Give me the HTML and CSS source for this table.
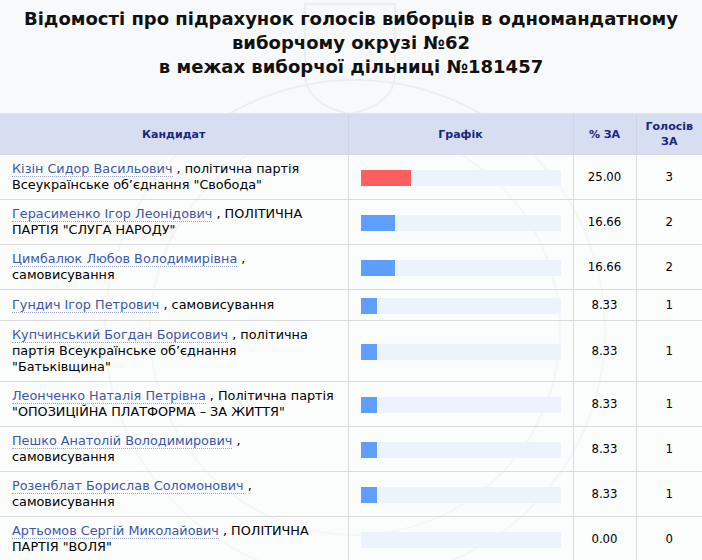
FILE: index.html
```html
<!DOCTYPE html>
<html lang="uk">
<head>
<meta charset="utf-8">
<title>Відомості про підрахунок голосів</title>
<link rel="stylesheet" href="styles.css">
</head>
<body>
<div class="page">
  <h1 class="title">Відомості про підрахунок голосів виборців в одномандатному<br>виборчому окрузі №62<br>в межах виборчої дільниці №181457</h1>
  <table class="results">
    <colgroup>
      <col class="c-cand"><col class="c-graph"><col class="c-pct"><col class="c-votes">
    </colgroup>
    <thead>
      <tr><th>Кандидат</th><th>Графік</th><th>% ЗА</th><th>Голосів<br>ЗА</th></tr>
    </thead>
    <tbody>
      <tr><td class="cand"><a class="name">Кізін Сидор Васильович</a> , політична партія Всеукраїнське об’єднання "Свобода"</td><td class="graph"><div class="track"><div class="bar red" style="width:50px"></div></div></td><td class="num">25.00</td><td class="num">3</td></tr>
      <tr><td class="cand"><a class="name">Герасименко Ігор Леонідович</a> , ПОЛІТИЧНА ПАРТІЯ "СЛУГА НАРОДУ"</td><td class="graph"><div class="track"><div class="bar" style="width:34px"></div></div></td><td class="num">16.66</td><td class="num">2</td></tr>
      <tr><td class="cand"><a class="name">Цимбалюк Любов Володимирівна</a> , самовисування</td><td class="graph"><div class="track"><div class="bar" style="width:34px"></div></div></td><td class="num">16.66</td><td class="num">2</td></tr>
      <tr><td class="cand"><a class="name">Гундич Ігор Петрович</a> , самовисування</td><td class="graph"><div class="track"><div class="bar" style="width:16px"></div></div></td><td class="num">8.33</td><td class="num">1</td></tr>
      <tr><td class="cand"><a class="name">Купчинський Богдан Борисович</a> , політична партія Всеукраїнське об’єднання "Батьківщина"</td><td class="graph"><div class="track"><div class="bar" style="width:16px"></div></div></td><td class="num">8.33</td><td class="num">1</td></tr>
      <tr><td class="cand"><a class="name">Леонченко Наталія Петрівна</a> , Політична партія "ОПОЗИЦІЙНА ПЛАТФОРМА – ЗА ЖИТТЯ"</td><td class="graph"><div class="track"><div class="bar" style="width:16px"></div></div></td><td class="num">8.33</td><td class="num">1</td></tr>
      <tr><td class="cand"><a class="name">Пешко Анатолій Володимирович</a> , самовисування</td><td class="graph"><div class="track"><div class="bar" style="width:16px"></div></div></td><td class="num">8.33</td><td class="num">1</td></tr>
      <tr><td class="cand"><a class="name">Розенблат Борислав Соломонович</a> , самовисування</td><td class="graph"><div class="track"><div class="bar" style="width:16px"></div></div></td><td class="num">8.33</td><td class="num">1</td></tr>
      <tr><td class="cand"><a class="name">Артьомов Сергій Миколайович</a> , ПОЛІТИЧНА ПАРТІЯ "ВОЛЯ"</td><td class="graph"><div class="track"><div class="bar" style="width:0px"></div></div></td><td class="num">0.00</td><td class="num">0</td></tr>
    </tbody>
  </table>
</div>
</body>
</html>
```
FILE: styles.css
```css
html, body {
  margin: 0;
  padding: 0;
}
body {
  background-color: #f8f9fa;
  background-image: url("data:image/svg+xml;utf8,<svg xmlns='http://www.w3.org/2000/svg' width='702' height='560'><g fill='none' stroke='%23eceef0' stroke-width='2'><path d='M305 4 h90 v70 q0 30 -45 40 q-45 -10 -45 -40 z'/><circle cx='355' cy='330' r='250'/><circle cx='355' cy='330' r='205'/></g></svg>");
  background-repeat: no-repeat;
  font-family: "DejaVu Sans", Verdana, sans-serif;
  color: #000;
}
.page {
  width: 702px;
}
.title {
  margin: 0;
  padding: 7px 0 0;
  height: 106px;
  box-sizing: content-box;
  text-align: center;
  font-size: 18px;
  line-height: 24px;
  font-weight: bold;
  color: #111;
}
.results {
  width: 702px;
  border-collapse: collapse;
  table-layout: fixed;
  font-size: 12.8px;
  line-height: 16px;
}
.c-cand { width: 348px; }
.c-graph { width: 225px; }
.c-pct { width: 63px; }
.c-votes { width: 66px; }
.results th {
  background: #d7def2;
  color: #1a2680;
  font-size: 11px;
  line-height: 15px;
  font-weight: bold;
  padding: 5px 2px;
  height: 29px;
  border-top: 1px solid #e2e4e8;
  border-left: 1px solid #cfd4e2;
  text-align: center;
  vertical-align: middle;
}
.results th:first-child { border-left: none; }
.results td {
  background: rgba(255, 255, 255, 0.45);
  padding: 6px 12px;
  border-bottom: 1px solid #dadada;
  border-left: 1px solid #dadada;
  vertical-align: middle;
}
.results td:first-child { border-left: none; }
.results tbody tr:first-child td { border-top: 1px solid #dadada; }
.name {
  color: #3c58a8;
  text-decoration: none;
  border-bottom: 1px dotted #9aa6cc;
}
.results td.num {
  text-align: center;
  font-family: "DejaVu Sans Condensed", "DejaVu Sans", sans-serif;
  font-stretch: condensed;
  font-size: 13px;
}
.results td.graph {
  padding: 6px 13px 6px 12px;
}
.track {
  width: 200px;
  height: 16px;
  margin: 2px 0 0;
  background: #edf3fd;
  display: flex;
}
.bar {
  height: 16px;
  background: #5e9ffd;
}
.bar.red {
  background: #ff5e5e;
}
```
